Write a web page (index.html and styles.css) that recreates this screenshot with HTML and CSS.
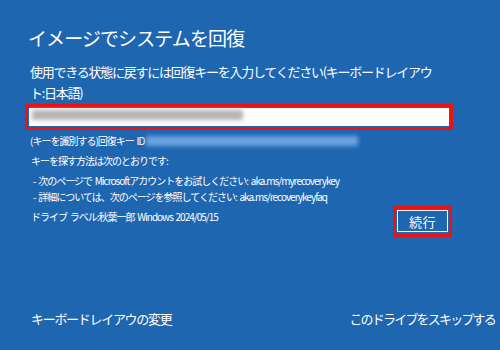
FILE: index.html
```html
<!DOCTYPE html>
<html lang="ja">
<head>
<meta charset="utf-8">
<link rel="stylesheet" href="styles.css">
</head>
<body>
<div class="screen">
  <main class="main">
    <h1 class="title">イメージでシステムを回復</h1>
    <p class="lead">使用できる状態に戻すには回復キーを入力してください(キーボードレイアウ<br>ト:日本語)</p>
    <div class="input-frame">
      <div class="input">
        <span class="blur-key"></span>
      </div>
    </div>
    <p class="small line-id">(キーを識別する)回復キー ID<span class="blur-id"></span></p>
    <p class="small line-how">キーを探す方法は次のとおりです:</p>
    <p class="small line-item">- 次のページで Microsoftアカウントをお試しください: aka.ms/myrecoverykey</p>
    <p class="small line-item2">- 詳細については、次のページを参照してください: aka.ms/recoverykeyfaq</p>
    <div class="row">
      <p class="small line-label">ドライブ ラベル:秋葉一郎 Windows 2024/05/15</p>
      <div class="btn-frame"><button class="btn">続行</button></div>
    </div>
  </main>
  <footer class="footer">
    <span class="link">キーボードレイアウの変更</span>
    <span class="link link-right">このドライブをスキップする</span>
  </footer>
</div>
</body>
</html>
```

FILE: styles.css
```css
* { box-sizing: border-box; }
html, body { margin: 0; padding: 0; }
body {
  width: 500px;
  height: 350px;
  overflow: hidden;
  background: #1f66b0;
  color: #ffffff;
  font-family: "Noto Sans CJK JP", "Noto Sans", sans-serif;
}
.screen {
  height: 350px;
  display: flex;
  flex-direction: column;
}
.main {
  padding: 25px 47px 0 25px;
  display: flex;
  flex-direction: column;
}
.title {
  margin: 0;
  padding-left: 3px;
  font-size: 19px;
  line-height: 26px;
  font-weight: normal;
  letter-spacing: -0.9px;
}
.lead {
  margin: 10px 0 0;
  padding-left: 5px;
  font-size: 13px;
  line-height: 21px;
  letter-spacing: -1.25px;
}
.input-frame {
  margin-top: 1px;
  height: 26px;
  border: 3px solid #ee1111;
  padding: 1px;
  background: #1f66b0;
}
.input {
  height: 100%;
  background: #ffffff;
  padding: 2px 0 0 3px;
}
.blur-key {
  display: block;
  width: 211px;
  height: 10px;
  background: #b4b4b4;
  filter: blur(2px);
}
.small {
  margin: 0;
  padding-left: 6px;
  font-size: 10px;
  line-height: 16px;
  letter-spacing: -1px;
  word-spacing: 1.5px;
}
.line-id { margin-top: 3px; display: flex; align-items: center; padding-left: 5px; }
.blur-id {
  display: inline-block;
  width: 212px;
  height: 10px;
  margin-left: 2px;
  background: #6aa3e0;
  filter: blur(2px);
}
.line-how { margin-top: 4px; }
.line-item { margin-top: 4px; padding-left: 8px; }
.line-item2 { padding-left: 8px; }
.row {
  margin-top: 4px;
  display: flex;
  justify-content: space-between;
  align-items: flex-start;
}
.line-label { padding-left: 6px; }
.btn-frame {
  margin-top: -3px;
  width: 59px;
  height: 31px;
  border: 3px solid #ee1111;
  padding: 1px 1px 2px 1px;
  margin-right: 1px;
}
.btn {
  display: block;
  width: 100%;
  height: 100%;
  border: 1px solid #ffffff;
  background: #1f66b0;
  color: #ffffff;
  font-family: "Noto Sans CJK JP", sans-serif;
  font-size: 13px;
  padding: 0;
  letter-spacing: 0.5px;
}
.footer {
  margin-top: auto;
  padding: 0 5px 21px 31px;
  display: flex;
  justify-content: space-between;
  font-size: 13px;
  line-height: 20px;
  letter-spacing: -1.3px;
}
.link-right { letter-spacing: -1.8px; }
```
